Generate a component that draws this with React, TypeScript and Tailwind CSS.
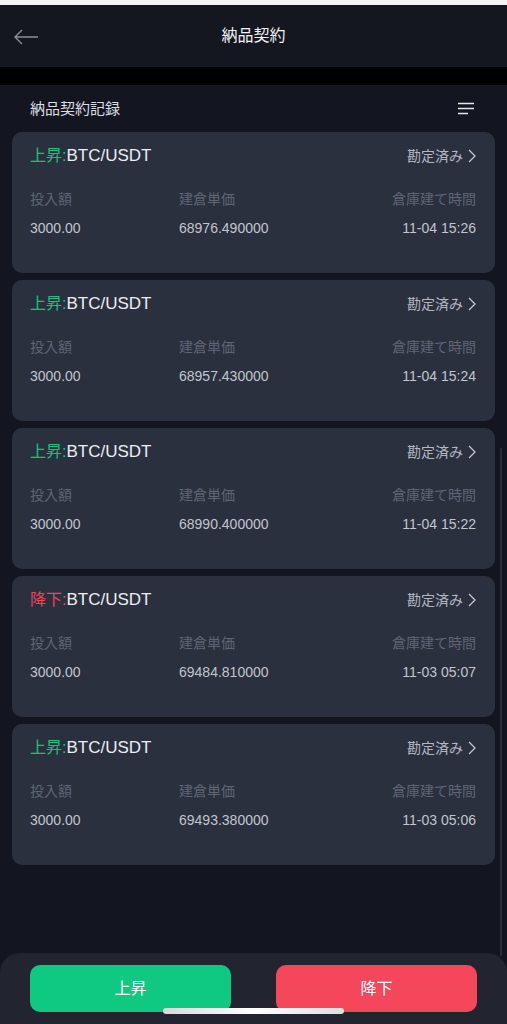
import React from 'react';

type Order = {
  side: 'up' | 'down';
  pair: string;
  amount: string;
  price: string;
  time: string;
};

const orders: Order[] = [
  { side: 'up', pair: 'BTC/USDT', amount: '3000.00', price: '68976.490000', time: '11-04 15:26' },
  { side: 'up', pair: 'BTC/USDT', amount: '3000.00', price: '68957.430000', time: '11-04 15:24' },
  { side: 'up', pair: 'BTC/USDT', amount: '3000.00', price: '68990.400000', time: '11-04 15:22' },
  { side: 'down', pair: 'BTC/USDT', amount: '3000.00', price: '69484.810000', time: '11-03 05:07' },
  { side: 'up', pair: 'BTC/USDT', amount: '3000.00', price: '69493.380000', time: '11-03 05:06' },
];

const font = 'font-["Liberation_Sans","Noto_Sans_CJK_JP",sans-serif]';

function OrderCard({ order }: { order: Order }) {
  const up = order.side === 'up';
  return (
    <div className="h-[141px] rounded-[10px] bg-[#2b303f] pl-[18px] pr-[19px] pt-[12px]">
      <div className="flex h-[24px] items-center justify-between">
        <div className="text-[16px] leading-[24px] text-[#eceef2]">
          <span className={up ? 'text-[#17c27d]' : 'text-[#f0435b]'}>{up ? '上昇:' : '降下:'}</span>
          <span className="text-[17px]">{order.pair}</span>
        </div>
        <div className="flex items-center gap-[5px] text-[14px] text-[#b3b7c0]">
          勘定済み
          <svg width="8" height="14" viewBox="0 0 8 14" fill="none">
            <polyline points="1,1 7,7 1,13" stroke="#c3c6cd" strokeWidth="1.3" />
          </svg>
        </div>
      </div>
      <div className="mt-[21px] grid h-[20px] grid-cols-[149px_1fr_auto] items-center text-[14px] text-[#5f6574]">
        <span>投入額</span>
        <span>建倉単価</span>
        <span className="text-right">倉庫建て時間</span>
      </div>
      <div className="mt-[9px] grid h-[20px] grid-cols-[149px_1fr_auto] items-center text-[14px] text-[#c1c5cd]">
        <span>{order.amount}</span>
        <span>{order.price}</span>
        <span className="text-right">{order.time}</span>
      </div>
    </div>
  );
}

export default function App() {
  return (
    <div className={`relative flex h-[1024px] w-full flex-col overflow-hidden bg-[#131620] ${font}`}>
      <div className="h-[5px] bg-[#f4f4f5]" />

      {/* Header */}
      <div className="relative flex h-[62px] items-center justify-center bg-[#141620]">
        <svg className="absolute left-[13px] top-[24px]" width="26" height="16" viewBox="0 0 26 16" fill="none">
          <path d="M25 8H2M9 1L2 8l7 7" stroke="#8b8e98" strokeWidth="1.4" />
        </svg>
        <span className="text-[16px] font-normal text-[#f2f3f5]">納品契約</span>
      </div>
      <div className="h-[18px] bg-black" />

      {/* Section heading */}
      <div className="flex h-[47px] items-center justify-between pl-[30px] pr-[33px]">
        <span className="pt-[2px] text-[15px] text-[#dcdde1]">納品契約記録</span>
        <svg width="16" height="13" viewBox="0 0 16 13" fill="none">
          <path d="M0 1.5h16M0 6.5h16M0 11.5h10" stroke="#e6e7ea" strokeWidth="1.6" />
        </svg>
      </div>

      {/* List */}
      <div className="flex flex-1 flex-col gap-[7px] px-[12px]">
        {orders.map((o, i) => (
          <OrderCard key={i} order={o} />
        ))}
      </div>

      {/* scroll indicator */}
      <div className="absolute right-[5px] top-[448px] h-[508px] w-[2px] rounded-full bg-[#2a2e3a]" />

      {/* Footer */}
      <div className="flex h-[71px] justify-between rounded-t-[20px] bg-[#222530] px-[30px] pt-[12px]">
        <button className="h-[47px] w-[201px] rounded-[10px] bg-[#10c980] text-[16px] font-normal text-white">上昇</button>
        <button className="h-[47px] w-[201px] rounded-[10px] bg-[#f4475c] text-[16px] font-normal text-white">降下</button>
      </div>

      <div className="absolute bottom-[10px] left-[163px] h-[6px] w-[181px] rounded-full bg-gradient-to-r from-[#d9d9d9] via-[#ffffff] to-[#dedede]" />
    </div>
  );
}
